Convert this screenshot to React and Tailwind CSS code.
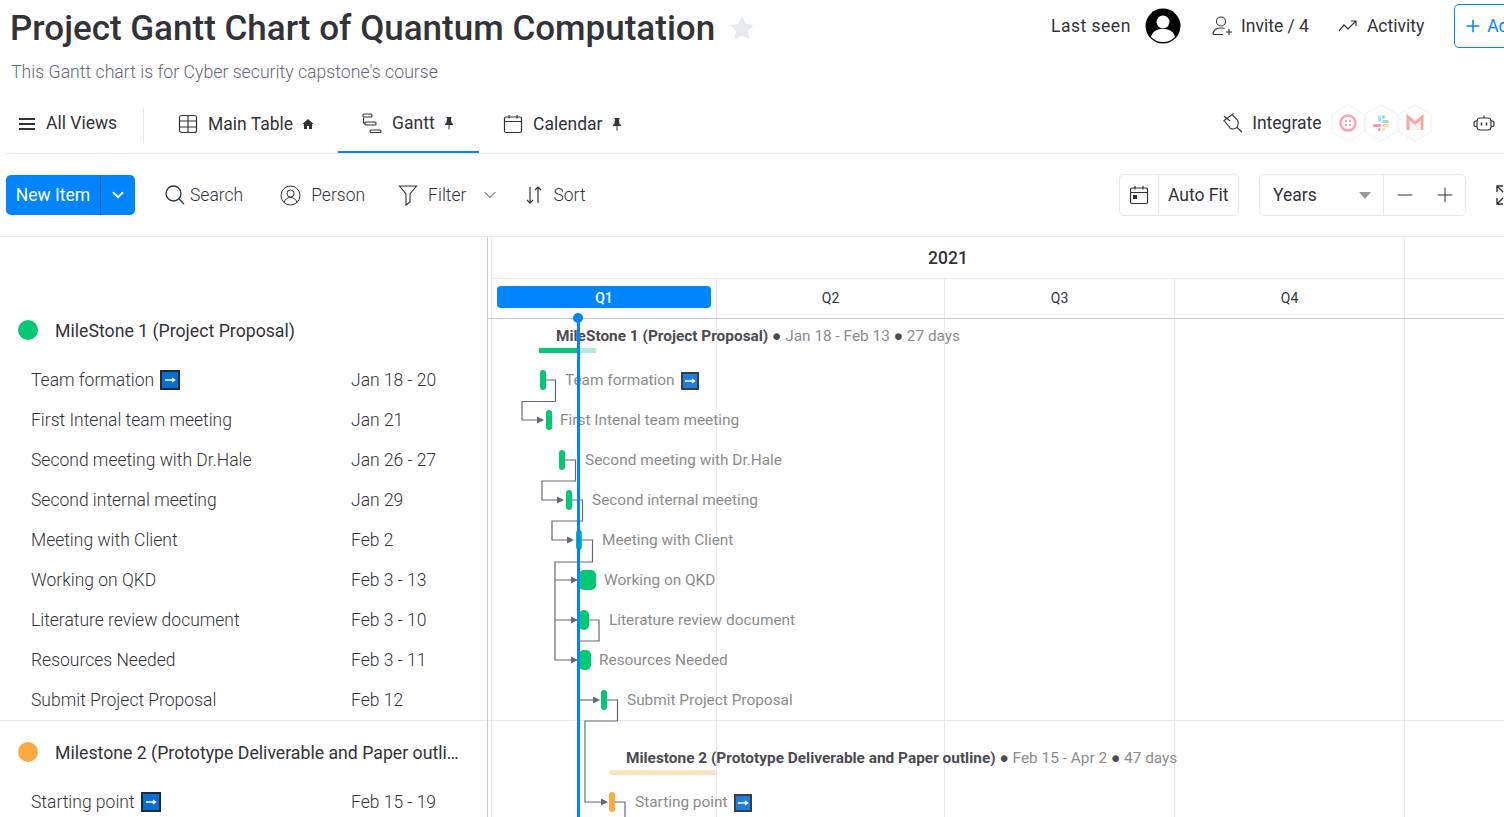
import { ChevronDown, Minus, Plus } from "lucide-react"

const GROUP_ONE = [
  { name: "Team formation", date: "Jan 18 - 20", arrow: true },
  { name: "First Intenal team meeting", date: "Jan 21" },
  { name: "Second meeting with Dr.Hale", date: "Jan 26 - 27" },
  { name: "Second internal meeting", date: "Jan 29" },
  { name: "Meeting with Client", date: "Feb 2" },
  { name: "Working on QKD", date: "Feb 3 - 13" },
  { name: "Literature review document", date: "Feb 3 - 10" },
  { name: "Resources Needed", date: "Feb 3 - 11" },
  { name: "Submit Project Proposal", date: "Feb 12" },
]

// page coordinates, the chart subtracts its own origin
const BARS = [
  { x: 540, y: 370, w: 6, label: "Team formation", lx: 565, arrow: true },
  { x: 546, y: 410, w: 6, label: "First Intenal team meeting", lx: 560 },
  { x: 559, y: 450, w: 6, label: "Second meeting with Dr.Hale", lx: 585 },
  { x: 566, y: 490, w: 6, label: "Second internal meeting", lx: 592 },
  { x: 576, y: 530, w: 6, label: "Meeting with Client", lx: 602 },
  { x: 579, y: 570, w: 17, label: "Working on QKD", lx: 604 },
  { x: 579, y: 610, w: 10, label: "Literature review document", lx: 609 },
  { x: 579, y: 650, w: 12, label: "Resources Needed", lx: 599 },
  { x: 601, y: 690, w: 6, label: "Submit Project Proposal", lx: 627 },
  { x: 609, y: 792, w: 6, label: "Starting point", lx: 635, arrow: true, orange: true },
]

const LINKS = [
  "M545 380H555.5V401.5H522V420H540",
  "M565 460H575.5V481H542V500H560",
  "M572 500H582.5V521H552V540H570",
  "M582 540H592.5V562H555V660H573M555 580H573M555 620H573",
  "M589 620H599V641H578",
  "M578 700H595",
  "M607 700H617.5V721H585V802H603",
  "M615 802H625V817",
]
const ARROWS = [[544, 420], [564, 500], [574, 540], [578, 580], [578, 620], [578, 660], [600, 700], [608, 802]]

function ArrowEmoji({ small }) {
  return (
    <span className={`inline-flex items-center justify-center bg-[#0a6fd1] border-2 border-[#1c2b3a] shrink-0 ${small ? "w-[18px] h-[18px] opacity-90" : "w-5 h-5"}`}>
      <svg width="12" height="8" viewBox="0 0 12 8" fill="none" stroke="white" strokeWidth="1.4">
        <path d="M1 4h9M8 2l2.5 2L8 6" />
      </svg>
    </span>
  )
}

function PinIcon() {
  return (
    <svg width="10" height="14" viewBox="0 0 10 14" fill="#323338">
      <path d="M2.5 1h5v1l-.6.5.6 4L9 8v1H5.5v4.5h-1V9H1V8l1.500-1.500.6-4-.6-.5z" />
    </svg>
  )
}

function TableIcon() {
  return (
    <svg width="20" height="20" viewBox="0 0 20 20" fill="none" stroke="#323338" strokeWidth="1.2">
      <rect x="1.500" y="1.500" width="17" height="17" rx="2" />
      <path d="M1.500 7h17M1.500 13h17M10 1.500v17" />
    </svg>
  )
}

function GanttIcon() {
  return (
    <svg width="20" height="20" viewBox="0 0 20 20" fill="none" stroke="#323338" strokeWidth="1.1">
      <rect x="1" y="1" width="9" height="3" rx="1" />
      <rect x="3" y="9" width="11" height="3" rx="1" />
      <rect x="8" y="17" width="11" height="2.500" rx="1" />
      <path d="M1.500 4.500V10H3" />
    </svg>
  )
}

function CalendarIcon({ dot }) {
  return (
    <svg width="20" height="20" viewBox="0 0 20 20" fill="none" stroke="#323338" strokeWidth="1.2">
      <rect x="1.500" y="3" width="17" height="15.500" rx="1.500" />
      <path d="M1.500 7.500h17M6 1v3.500M14 1v3.500" />
      {dot && <rect x="4" y="10" width="4" height="4" fill="#323338" stroke="none" />}
    </svg>
  )
}

function PlugIcon() {
  return (
    <svg width="20" height="20" viewBox="0 0 20 20" fill="none" stroke="#323338" strokeWidth="1.100">
      <path d="M0.500 8L10.500 0.500M1 3L7 8" />
      <path d="M1.500 8L7.500 15.500C10 16.500 13 15.500 14.500 13.500C15.500 11.500 15.500 9 14.500 7L9.500 2" />
      <path d="M14 14.500L19 19" />
    </svg>
  )
}

function BotIcon() {
  return (
    <svg className="shrink-0" width="22" height="16" viewBox="0 0 22 16" fill="none" stroke="#323338" strokeWidth="1.200">
      <rect x="4" y="3" width="14" height="12" rx="3" />
      <path d="M11 3V.500M4 6H2.500C1.500 6 1 7 1 8.500V10C1 11 2 11.500 2.500 11.500H4M18 6h1.500c1 0 1.500 1 1.500 2.500V10c0 1-1 1.500-1.500 1.500H18" />
      <path d="M8.500 7.500v3M13.500 7.500v3" strokeWidth="1.500" />
    </svg>
  )
}

function HexBadge({ children }) {
  return (
    <span className="relative -mr-[0.5px] w-[34px] h-[38px] flex items-center justify-center">
      <svg className="absolute inset-0" width="34" height="38" viewBox="0 0 34 38" fill="white" stroke="#eef0f5">
        <path d="M17 1l16 9v18l-16 9-16-9V10z" />
      </svg>
      <svg className="relative opacity-45" width="20" height="20" viewBox="0 0 20 20">{children}</svg>
    </span>
  )
}

function TabItem({ icon, label, pin, active, className }) {
  return (
    <div className={`h-[53px] flex items-center border-b-2 ${active ? "pb-[5px] border-[#0085ff]" : "pb-[3px] border-transparent"} ${className}`}>
      {icon}
      <span className="ml-[10px] mr-[9px]">{label}</span>
      {pin}
    </div>
  )
}

function Row({ name, date, arrow }) {
  return (
    <div className="h-10 flex items-center pl-[31px] font-light text-[#323338]">
      <span className="w-[320px] flex items-center gap-[6px] whitespace-nowrap">
        {name}
        {arrow && <ArrowEmoji />}
      </span>
      <span>{date}</span>
    </div>
  )
}

export default function App() {
  return (
    <div className="w-[1504px] h-[817px] overflow-hidden bg-white text-[#323338] text-[17.5px] font-[Roboto,sans-serif]">
      <header className="h-[100px] flex items-start">
        <div className="w-[1051px] shrink-0 pl-[10px]">
          <div className="flex items-center gap-[14px] h-[56px]">
            <h1 className="text-[35px] leading-none font-medium whitespace-nowrap">Project Gantt Chart of Quantum Computation</h1>
            <svg width="26" height="26" viewBox="0 0 24 24" fill="#e6e9ef">
              <path d="M12 1l3.400 7.300 7.900.9-5.900 5.400 1.600 7.900L12 18.600l-7 3.900 1.600-7.900L.7 9.200l7.900-.9z" />
            </svg>
          </div>
          <p className="mt-[4px] pl-[1px] text-[#676879] font-light leading-6 text-[17.7px]">This Gantt chart is for Cyber security capstone's course</p>
        </div>
        <div className="h-[52px] flex items-center whitespace-nowrap shrink-0">
          <span className="w-[80px] tracking-[0.5px]">Last seen</span>
          <svg className="ml-[14px]" width="36" height="36" viewBox="0 0 36 36">
            <circle cx="18" cy="18" r="17.500" fill="#000" />
            <circle cx="18" cy="14" r="6.500" fill="#fff" />
            <path d="M6 29c2-7 7-8 12-8s10 1 12 8c-3 3-7 5-12 5s-9-2-12-5z" fill="#fff" />
          </svg>
          <svg className="ml-[31px]" width="20" height="20" viewBox="0 0 20 20" fill="none" stroke="#323338" strokeWidth="1.100">
            <circle cx="9" cy="5.500" r="4.500" />
            <path d="M1 18.500c0-4 3-6.500 7-6.500h2.500c.8 0 1.500.2 2 .5M1 18.500h10M14 16h6M17 13v6" />
          </svg>
          <span className="ml-[9px]">Invite / 4</span>
          <svg className="ml-[29px]" width="20" height="14" viewBox="0 0 20 14" fill="none" stroke="#323338" strokeWidth="1.200">
            <path d="M1 12l5-6 4 4 8-8M13 2h5v5" />
          </svg>
          <span className="ml-[9px]">Activity</span>
          <div className="ml-[30px] h-[44px] w-[120px] flex items-center pl-[8px] gap-[4px] border border-[#0085ff] rounded-[5px] text-[#0085ff]">
            <Plus className="shrink-0" size={20} strokeWidth={1.800} />
            <span>Add to board</span>
          </div>
        </div>
      </header>

      <nav className="ml-[6px] h-[54px] flex items-start border-b border-[#e6e9ef] whitespace-nowrap">
        <div className="mt-[7px] flex items-center gap-[10px] pl-[12px] pb-[3px] w-[138px] h-[36px] border-r border-[#e6e9ef]">
          <svg width="18" height="14" viewBox="0 0 18 14" stroke="#323338" strokeWidth="2">
            <path d="M1 2h16M1 7h16M1 12h16" />
          </svg>
          <span>All Views</span>
        </div>
        <TabItem
          className="ml-[34px]"
          icon={<TableIcon />}
          label="Main Table"
          pin={
            <svg width="12" height="12" viewBox="0 0 12 12" fill="#323338">
              <path d="M6 1L0.500 6H2v5h3V8h2v3h3V6h1.500z" />
            </svg>
          }
        />
        <TabItem className="ml-[24px] w-[141px] pl-[24px]" icon={<GanttIcon />} label="Gantt" pin={<PinIcon />} active />
        <TabItem className="ml-[24px]" icon={<CalendarIcon />} label="Calendar" pin={<PinIcon />} />
        <div className="ml-auto mr-[9px] h-[46px] flex items-center shrink-0">
          <PlugIcon />
          <span className="ml-[9px] mr-[9px]">Integrate</span>
          <HexBadge>
            <circle cx="10" cy="10" r="7.500" fill="none" stroke="#f2385f" strokeWidth="2.500" />
            <circle cx="8" cy="8" r="1.300" fill="#f2385f" />
            <circle cx="12" cy="8" r="1.300" fill="#f2385f" />
            <circle cx="8" cy="12" r="1.300" fill="#f2385f" />
            <circle cx="12" cy="12" r="1.300" fill="#f2385f" />
          </HexBadge>
          <HexBadge>
            <rect x="7" y="2" width="3" height="7" rx="1.500" fill="#36c5f0" />
            <rect x="11" y="7" width="7" height="3" rx="1.500" fill="#2eb67d" />
            <rect x="11" y="2" width="3" height="4" rx="1.500" fill="#2eb67d" />
            <rect x="11" y="11" width="7" height="3" rx="1.500" fill="#ecb22e" />
            <rect x="11" y="15" width="3" height="3" rx="1.500" fill="#ecb22e" />
            <rect x="2" y="11" width="8" height="3" rx="1.500" fill="#e01e5a" />
            <rect x="7" y="15" width="3" height="3" rx="1.500" fill="#e01e5a" />
          </HexBadge>
          <HexBadge>
            <path d="M3 5l7 6 7-6v12H3z" fill="#e6e6e6" />
            <path d="M3 17V4l7 6 7-6v13" fill="none" stroke="#ea4335" strokeWidth="3" />
          </HexBadge>
          <span className="ml-[42px]">
            <BotIcon />
          </span>
        </div>
      </nav>

      <div className="h-[83px] flex items-center pl-[6px] border-b border-[#e6e9ef] whitespace-nowrap">
        <div className="h-10 w-[129px] flex rounded-[5px] bg-[#0085ff] text-white shrink-0">
          <span className="w-[95px] flex items-center justify-center border-r border-[#0060b9]">New Item</span>
          <span className="flex-1 flex items-center justify-center">
            <ChevronDown size={18} strokeWidth={2.500} />
          </span>
        </div>
        <svg className="ml-[30px]" width="20" height="20" viewBox="0 0 20 20" fill="none" stroke="#323338" strokeWidth="1.300">
          <circle cx="8.500" cy="8.500" r="7.500" />
          <path d="M14 14l5 5" />
        </svg>
        <span className="ml-[5px] font-light">Search</span>
        <svg className="ml-[37px]" width="21" height="21" viewBox="0 0 21 21" fill="none" stroke="#323338" strokeWidth="1">
          <circle cx="10.500" cy="10.500" r="9.500" />
          <circle cx="10.500" cy="8.500" r="3.500" />
          <path d="M4 17.500c1-3.500 3.500-5 6.500-5s5.500 1.500 6.500 5" />
        </svg>
        <span className="ml-[10px] font-light">Person</span>
        <svg className="ml-[33px]" width="20" height="22" viewBox="0 0 20 22" fill="none" stroke="#323338" strokeWidth="1.100">
          <path d="M1.500 2h17l-6.500 8v8l-4 3V10z" />
        </svg>
        <span className="ml-[10px] font-light">Filter</span>
        <ChevronDown className="ml-[14px]" size={20} strokeWidth={1.200} />
        <svg className="ml-[25px]" width="18" height="20" viewBox="0 0 18 20" fill="none" stroke="#323338" strokeWidth="1.200">
          <path d="M5 2v16M2 15l3 3 3-3M13 18V2M10 5l3-3 3 3" />
        </svg>
        <span className="ml-[10px] font-light">Sort</span>

        <div className="ml-auto h-[42px] flex items-center border border-[#e6e9ef] rounded-[5px] shrink-0">
          <span className="w-[39px] h-full flex items-center justify-center border-r border-[#e6e9ef]">
            <CalendarIcon dot />
          </span>
          <span className="w-[79px] pl-[9px]">Auto Fit</span>
        </div>
        <div className="ml-[20px] h-[42px] flex items-center border border-[#e6e9ef] rounded-[5px] shrink-0">
          <span className="w-[124px] h-full flex items-center justify-between pl-[13px] pr-[12px] border-r border-[#e6e9ef]">
            Years
            <span className="w-0 h-0 border-x-[6px] border-x-transparent border-t-[7px] border-t-[#999]" />
          </span>
          <span className="w-[81px] flex items-center justify-center gap-[16px]">
            <Minus size={24} strokeWidth={1} />
            <Plus size={24} strokeWidth={1} />
          </span>
        </div>
        <div className="ml-[30px] w-[8px] shrink-0">
          <svg className="max-w-none" width="20" height="20" viewBox="0 0 20 20" fill="none" stroke="#323338" strokeWidth="1.400">
            <path d="M1 7V1h6M1 1l6 6M1 13v6h6M1 19l6-6M13 1h6v6M19 1l-6 6M13 19h6v-6M19 19l-6-6" />
          </svg>
        </div>
      </div>

      <main className="flex h-[580px]">
        <aside className="w-[488px] shrink-0 border-r border-[#c5c7d4]">
          <div className="h-[123px] flex items-start pt-[83px] pl-[18px]">
            <span className="w-5 h-5 rounded-full bg-[#00c875]" />
            <span className="ml-[17px] leading-[22px] text-[17.7px]">MileStone 1 (Project Proposal)</span>
          </div>
          {GROUP_ONE.map((row) => (
            <Row key={row.name} {...row} />
          ))}
          <div className="h-[62px] flex items-start pt-[21px] pl-[18px] border-t border-[#e6e9ef]">
            <span className="w-5 h-5 rounded-full bg-[#fdab3d] shrink-0" />
            <span className="ml-[17px] w-[405px] truncate leading-[22px] text-[17.7px]">Milestone 2 (Prototype Deliverable and Paper outline)</span>
          </div>
          <Row name="Starting point" date="Feb 15 - 19" arrow />
        </aside>

        <section className="relative flex-1 min-w-0 text-[#323338]">
          <div className="ml-[3px] h-[42px] border-b border-l border-[#e6e9ef] flex">
            <span className="w-[913px] pt-[2px] flex items-center justify-center border-r border-[#e6e9ef] font-medium">2021</span>
          </div>
          <div className="h-[40px] border-b border-[#c5c7d4] pl-[3px] flex text-[14px]">
            <div className="w-[225px] flex items-center border-l border-[#e6e9ef] pl-[5px] pb-[3px]">
              <span className="w-[214px] h-[22px] pt-[2px] rounded-[4px] bg-[#0085ff] text-white font-medium flex items-center justify-center">Q1</span>
            </div>
            <div className="w-[228px] flex items-center justify-center border-l border-[#e6e9ef]">Q2</div>
            <div className="w-[230px] flex items-center justify-center border-l border-[#e6e9ef]">Q3</div>
            <div className="w-[231px] flex items-center justify-center border-x border-[#e6e9ef]">Q4</div>
          </div>

          <div className="relative h-[498px] overflow-hidden">
            {[3, 228, 456, 686, 916].map((x) => (
              <div key={x} className="absolute top-0 bottom-0 w-px bg-[#e6e9ef]" style={{ left: x }} />
            ))}
            <div className="absolute left-0 right-0 top-[401px] h-px bg-[#e6e9ef]" />

            <div className="absolute top-[28.500px] left-[51px] w-[57px] h-[5px] bg-[#00c875]" />
            <div className="absolute top-[28.500px] left-[91px] w-[17px] h-[5px] bg-[#b3eed3]" />
            <div className="absolute top-[451px] left-[121px] w-[107px] h-[5px] rounded-sm bg-[#fee2bd]" />

            <div className="absolute top-[7px] left-[68px] text-[15.4px] leading-5 whitespace-nowrap text-[#8c8c8c]">
              <b className="font-bold text-[#4b4b50]">MileStone 1 (Project Proposal)</b> <span className="text-[#4b4b50]">●</span> Jan 18 - Feb 13 <span className="text-[#4b4b50]">●</span> 27 days
            </div>
            <div className="absolute top-[429px] left-[138px] text-[15.4px] leading-5 whitespace-nowrap text-[#8c8c8c]">
              <b className="font-bold text-[#4b4b50]">Milestone 2 (Prototype Deliverable and Paper outline)</b> <span className="text-[#4b4b50]">●</span> Feb 15 - Apr 2 <span className="text-[#4b4b50]">●</span> 47 days
            </div>

            {BARS.map((bar) => (
              <div key={bar.label}>
                <div
                  className={`absolute h-5 rounded-[5px] ${bar.orange ? "bg-[#fdab3d]" : "bg-[#00c875]"}`}
                  style={{ left: bar.x - 488, top: bar.y - 319, width: bar.w }}
                />
                <div
                  className="absolute h-5 pt-[2px] flex items-center gap-[6px] text-[15.4px] text-[#8c8c8c] whitespace-nowrap"
                  style={{ left: bar.lx - 488, top: bar.y - 319 }}
                >
                  {bar.label}
                  {bar.arrow && <ArrowEmoji small />}
                </div>
              </div>
            ))}

            <svg className="absolute inset-0" width="1016" height="498" viewBox="488 319 1016 498" fill="none">
              {LINKS.map((d) => (
                <path key={d} d={d} stroke="#676879" strokeWidth="1.200" />
              ))}
              {ARROWS.map(([x, y]) => (
                <path key={`${x}-${y}`} d={`M${x} ${y}l-7-3.500v7z`} fill="#676879" />
              ))}
              <path d="M578.500 319V817" stroke="#0085ff" strokeWidth="3" />
            </svg>
          </div>
          <span className="absolute left-[85px] top-[76px] w-[10px] h-[10px] rounded-full bg-[#0085ff]" />
        </section>
      </main>
    </div>
  )
}
